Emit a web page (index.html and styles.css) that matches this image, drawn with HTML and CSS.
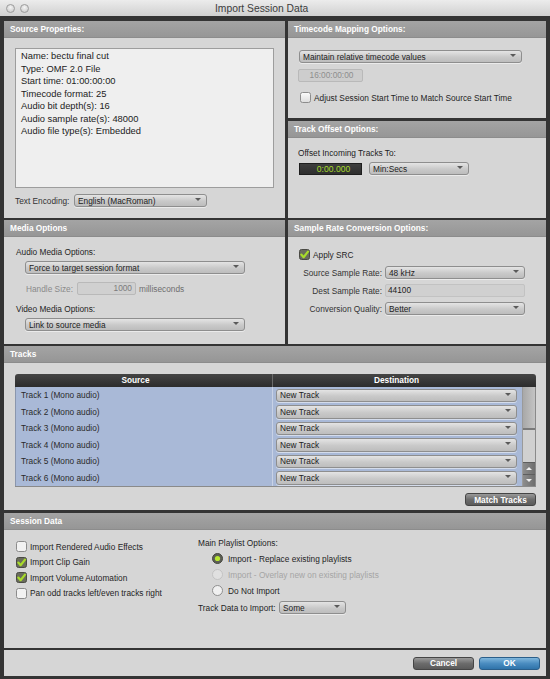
FILE: index.html
```html
<!DOCTYPE html>
<html>
<head>
<meta charset="utf-8">
<title>Import Session Data</title>
<link rel="stylesheet" href="styles.css">
</head>
<body>
<div class="window">
  <div class="titlebar">
    <div class="lights"><span class="light"></span><span class="light"></span></div>
    <div class="title">Import Session Data</div>
  </div>

  <div class="main">
    <div class="toprow">
      <section class="panel source">
        <div class="phead">Source Properties:</div>
        <div class="listbox">
          <div>Name: bectu final cut</div>
          <div>Type: OMF 2.0 File</div>
          <div>Start time: 01:00:00:00</div>
          <div>Timecode format: 25</div>
          <div>Audio bit depth(s): 16</div>
          <div>Audio sample rate(s): 48000</div>
          <div>Audio file type(s): Embedded</div>
        </div>
        <div class="encrow">
          <span class="enclbl">Text Encoding:</span>
          <div class="sel w-enc"><span>English (MacRoman)</span><i class="arr"></i></div>
        </div>
      </section>

      <div class="rightcol">
        <section class="panel timecode">
          <div class="phead">Timecode Mapping Options:</div>
          <div class="sel w-tc"><span>Maintain relative timecode values</span><i class="arr"></i></div>
          <div class="field tcfield">16:00:00:00</div>
          <div class="checkrow tccheck">
            <svg class="cb" width="11" height="11" viewBox="0 0 11 11"><defs><linearGradient id="cbg" x1="0" y1="0" x2="0" y2="1"><stop offset="0" stop-color="#fbfbfb"/><stop offset="1" stop-color="#dcdcdc"/></linearGradient></defs><rect x="0.5" y="0.5" width="10" height="10" rx="2" fill="url(#cbg)" stroke="#8c8c8c"/></svg>
            <span>Adjust Session Start Time to Match Source Start Time</span>
          </div>
        </section>
        <section class="panel offset">
          <div class="phead">Track Offset Options:</div>
          <div class="lbl offlbl">Offset Incoming Tracks To:</div>
          <div class="offrow">
            <div class="counter">0:00.000</div>
            <div class="sel w-min"><span>Min:Secs</span><i class="arr"></i></div>
          </div>
        </section>
      </div>
    </div>

    <div class="midrow">
      <section class="panel media">
        <div class="phead">Media Options</div>
        <div class="lbl audlbl">Audio Media Options:</div>
        <div class="sel w-media"><span>Force to target session format</span><i class="arr"></i></div>
        <div class="handlerow">
          <span class="dis hlbl">Handle Size:</span>
          <div class="field hfield">1000</div>
          <span class="dis2">milliseconds</span>
        </div>
        <div class="lbl vidlbl">Video Media Options:</div>
        <div class="sel w-media"><span>Link to source media</span><i class="arr"></i></div>
      </section>

      <section class="panel srcpanel">
        <div class="phead">Sample Rate Conversion Options:</div>
        <div class="checkrow srccheck">
          <svg class="cb" width="11" height="11" viewBox="0 0 11 11"><rect x="0.5" y="0.5" width="10" height="10" rx="2" fill="#6a6c5c" stroke="#4a4a44"/><path d="M2.3 5.6 L4.6 8.2 L9 2.6" fill="none" stroke="#a8dc2a" stroke-width="2.2" stroke-linecap="round" stroke-linejoin="round"/></svg>
          <span>Apply SRC</span>
        </div>
        <div class="srcgrid">
          <span class="rl">Source Sample Rate:</span>
          <div class="sel"><span>48 kHz</span><i class="arr"></i></div>
          <span class="rl">Dest Sample Rate:</span>
          <div class="field destfield">44100</div>
          <span class="rl">Conversion Quality:</span>
          <div class="sel"><span>Better</span><i class="arr"></i></div>
        </div>
      </section>
    </div>

    <section class="panel tracks">
      <div class="phead">Tracks</div>
      <div class="table">
        <div class="thead">
          <div class="th th-src">Source</div>
          <div class="th th-dst">Destination</div>
        </div>
        <div class="tbody">
          <div class="col-src">
            <div class="trow">Track 1 (Mono audio)</div>
            <div class="trow">Track 2 (Mono audio)</div>
            <div class="trow">Track 3 (Mono audio)</div>
            <div class="trow">Track 4 (Mono audio)</div>
            <div class="trow">Track 5 (Mono audio)</div>
            <div class="trow">Track 6 (Mono audio)</div>
          </div>
          <div class="col-dst">
            <div class="drow"><div class="sel tsel"><span>New Track</span><i class="arr"></i></div></div>
            <div class="drow"><div class="sel tsel"><span>New Track</span><i class="arr"></i></div></div>
            <div class="drow"><div class="sel tsel"><span>New Track</span><i class="arr"></i></div></div>
            <div class="drow"><div class="sel tsel"><span>New Track</span><i class="arr"></i></div></div>
            <div class="drow"><div class="sel tsel"><span>New Track</span><i class="arr"></i></div></div>
            <div class="drow"><div class="sel tsel"><span>New Track</span><i class="arr"></i></div></div>
          </div>
          <div class="scroll">
            <div class="thumb"></div>
            <div class="strack"></div>
            <div class="sbtn"><i class="up"></i></div>
            <div class="sbtn"><i class="down"></i></div>
          </div>
        </div>
      </div>
      <div class="matchrow"><div class="btn dark">Match Tracks</div></div>
    </section>

    <section class="panel session">
      <div class="phead">Session Data</div>
      <div class="sessbody">
        <div class="checks">
          <div class="checkrow">
            <svg class="cb" width="11" height="11" viewBox="0 0 11 11"><rect x="0.5" y="0.5" width="10" height="10" rx="2" fill="#f2f2f2" stroke="#8c8c8c"/></svg>
            <span>Import Rendered Audio Effects</span>
          </div>
          <div class="checkrow">
            <svg class="cb" width="11" height="11" viewBox="0 0 11 11"><rect x="0.5" y="0.5" width="10" height="10" rx="2" fill="#6a6c5c" stroke="#4a4a44"/><path d="M2.3 5.6 L4.6 8.2 L9 2.6" fill="none" stroke="#a8dc2a" stroke-width="2.2" stroke-linecap="round" stroke-linejoin="round"/></svg>
            <span>Import Clip Gain</span>
          </div>
          <div class="checkrow">
            <svg class="cb" width="11" height="11" viewBox="0 0 11 11"><rect x="0.5" y="0.5" width="10" height="10" rx="2" fill="#6a6c5c" stroke="#4a4a44"/><path d="M2.3 5.6 L4.6 8.2 L9 2.6" fill="none" stroke="#a8dc2a" stroke-width="2.2" stroke-linecap="round" stroke-linejoin="round"/></svg>
            <span>Import Volume Automation</span>
          </div>
          <div class="checkrow">
            <svg class="cb" width="11" height="11" viewBox="0 0 11 11"><rect x="0.5" y="0.5" width="10" height="10" rx="2" fill="#f2f2f2" stroke="#8c8c8c"/></svg>
            <span>Pan odd tracks left/even tracks right</span>
          </div>
        </div>
        <div class="playlist">
          <div class="lbl">Main Playlist Options:</div>
          <div class="radios">
            <div class="radiorow">
              <svg class="rb" width="11" height="11" viewBox="0 0 11 11"><circle cx="5.5" cy="5.5" r="5" fill="#5d5f55" stroke="#45463f"/><circle cx="5.5" cy="5.5" r="2.6" fill="#b8e830"/></svg>
              <span>Import - Replace existing playlists</span>
            </div>
            <div class="radiorow disabled">
              <svg class="rb" width="11" height="11" viewBox="0 0 11 11"><circle cx="5.5" cy="5.5" r="5" fill="#e0e0e0" stroke="#c2c2c2"/></svg>
              <span>Import - Overlay new on existing playlists</span>
            </div>
            <div class="radiorow">
              <svg class="rb" width="11" height="11" viewBox="0 0 11 11"><circle cx="5.5" cy="5.5" r="5" fill="#f0f0f0" stroke="#8e8e8e"/></svg>
              <span>Do Not Import</span>
            </div>
          </div>
          <div class="tdrow">
            <span class="tdlbl">Track Data to Import:</span>
            <div class="sel w-some"><span>Some</span><i class="arr"></i></div>
          </div>
        </div>
      </div>
    </section>

    <div class="footer">
      <div class="btn dark cancel">Cancel</div>
      <div class="btn blue ok">OK</div>
    </div>
  </div>
</div>
</body>
</html>
```

FILE: styles.css
```css
* { box-sizing: border-box; margin: 0; padding: 0; }
html, body { width: 550px; height: 679px; overflow: hidden; }
body {
  background: #343434;
  font-family: "Liberation Sans", Arial, sans-serif;
  font-size: 8.3px;
  color: #1f1f1f;
}
.window { width: 550px; height: 679px; display: flex; flex-direction: column; }

/* title bar */
.titlebar {
  height: 16px;
  background: linear-gradient(#ececec, #d0d0d0);
  display: flex;
  align-items: center;
}
.lights { display: flex; gap: 5px; padding-left: 6px; width: 215px; }
.light {
  width: 9px; height: 9px; border-radius: 50%;
  background: radial-gradient(circle at 50% 35%, #f4f4f4, #c4c4c4);
  border: 1px solid #9c9c9c;
}
.title { font-size: 10.3px; color: #3c3c3c; }

.main { padding: 5px 4px 0 4px; display: flex; flex-direction: column; }

/* panels */
.panel { background: #d6d6d6; display: flex; flex-direction: column; }
.phead {
  height: 17px;
  flex: none;
  background: linear-gradient(#a4a4a4, #969696);
  color: #fff;
  font-weight: bold;
  font-size: 8.3px;
  line-height: 17px;
  padding-left: 6px;
  border-bottom: 1px solid #8c8c8c;
}

.toprow { display: grid; grid-template-columns: 281px 258px; column-gap: 3px; height: 197px; }
.rightcol { display: flex; flex-direction: column; gap: 3px; }
.rightcol .panel { height: 97px; }
.midrow { display: grid; grid-template-columns: 281px 258px; column-gap: 3px; height: 124px; margin-top: 2px; }

/* generic controls */
.sel {
  height: 13px;
  border: 1px solid #8e8e8e;
  border-radius: 3px;
  background: linear-gradient(#e4e4e4, #c9c9c9 55%, #bdbdbd);
  display: flex;
  justify-content: space-between;
  align-items: center;
  padding: 0 5px 0 3px;
  font-size: 8.3px;
  color: #222;
  box-shadow: 0 1px 0 rgba(255,255,255,0.5);
}
.arr {
  align-self: flex-start;
  margin-top: 3px;
  width: 0; height: 0;
  border-left: 3px solid transparent;
  border-right: 3px solid transparent;
  border-top: 3px solid #5a5a5a;
}
.field {
  height: 13px;
  border: 1px solid #b9b9b9;
  border-radius: 2px;
  background: #cdcdcd;
  font-size: 8.3px;
  line-height: 11px;
}
.checkrow { display: flex; align-items: center; gap: 3px; }
.cb, .rb { flex: none; display: block; }
.lbl { font-size: 8.3px; }

/* source properties */
.listbox {
  margin: 10px 0 0 11px;
  width: 259px;
  height: 140px;
  background: #efefef;
  border: 1px solid #9d9d9d;
  padding: 1px 0 0 5px;
  font-size: 9.35px;
  line-height: 12.5px;
  color: #222;
}
.encrow { display: flex; align-items: center; margin: 6px 0 0 11px; height: 13px; }
.enclbl { width: 59px; color: #333; }
.w-enc { width: 133px; }

/* timecode */
.w-tc { width: 223px; margin: 12px 0 0 11px; }
.tcfield { width: 65px; margin: 6px 0 0 10px; text-align: center; color: #8e8e8e; padding-left: 2px; }
.tccheck { margin: 10px 0 0 12px; }

/* offset */
.offlbl { margin: 10px 0 0 10px; color: #222; }
.offrow { display: flex; align-items: center; gap: 7px; margin: 4px 0 0 11px; }
.counter {
  width: 63px; height: 12px;
  background: linear-gradient(#3e3e3e, #2e2e2e);
  border: 1px solid #1e1e1e;
  color: #a6dc2c;
  font-size: 8.6px;
  line-height: 10px;
  text-align: center;
  padding-left: 6px;
}
.w-min { width: 100px; }

/* media */
.audlbl { margin: 10px 0 0 12px; }
.w-media { width: 220px; margin: 4px 0 0 21px; }
.handlerow { display: flex; align-items: center; margin: 8px 0 0 22px; height: 13px; }
.dis { color: #8a8a8a; }
.hlbl { width: 51px; }
.hfield { width: 59px; text-align: right; padding-right: 3px; color: #7c7c7c; background: #d0d0d0; }
.dis2 { color: #6e6e6e; margin-left: 3px; }
.vidlbl { margin: 9px 0 0 12px; }

/* sample rate */
.srccheck { margin: 12px 0 0 11px; }
.srcgrid {
  display: grid;
  grid-template-columns: 94px 140px;
  column-gap: 3px;
  row-gap: 5px;
  align-items: center;
  margin-top: 6px;
}
.rl { text-align: right; color: #333; }
.destfield { background: #d0d0d0; border-color: #c2c2c2; padding-left: 2px; color: #222; }

/* tracks */
.tracks { height: 164px; margin-top: 2px; }
.table { margin: 11px 0 0 11px; width: 521px; border-bottom: 1px solid #8a8a8a; }
.thead {
  height: 13px;
  display: flex;
  background: linear-gradient(#454545, #2c2c2c);
  border-radius: 3px 3px 0 0;
  color: #fff;
  font-weight: bold;
  font-size: 8.3px;
  line-height: 13px;
}
.th-src { width: 258px; text-align: center; padding-right: 16px; border-right: 1px solid #6a6a6a; }
.th-dst { flex: 1; text-align: center; padding-right: 16px; }
.tbody { display: flex; height: 99px; }
.col-src { width: 258px; background: #a9b9d7; border-left: 1px solid #8a96ad; border-right: 1px solid #c8d2e6; }
.trow { height: 16.5px; line-height: 16.5px; padding-left: 5px; color: #2a2a2a; }
.col-dst { width: 249px; background: #a9b9d7; }
.drow { height: 16.5px; display: flex; align-items: center; padding-left: 3px; }
.tsel { width: 241px; height: 13.5px; }
.scroll { width: 14px; display: flex; flex-direction: column; background: #cbcbcb; border-left: 1px solid #9a9a9a; border-right: 1px solid #8a8a8a; }
.thumb { height: 43px; background: linear-gradient(90deg, #a8a8a8, #c4c4c4); border-bottom: 2px solid #7a7a7a; }
.strack { flex: 1; background: #d0d0d0; }
.sbtn {
  height: 12px;
  background: linear-gradient(90deg, #8d8d8d, #6e6e6e);
  border-top: 1px solid #5e5e5e;
  display: flex; align-items: center; justify-content: center;
}
.up { width: 0; height: 0; border-left: 3px solid transparent; border-right: 3px solid transparent; border-bottom: 3px solid #f0f0f0; }
.down { width: 0; height: 0; border-left: 3px solid transparent; border-right: 3px solid transparent; border-top: 3px solid #f0f0f0; }
.matchrow { display: flex; justify-content: flex-end; padding-right: 10px; margin-top: 6px; }

.btn {
  height: 13px;
  border-radius: 3px;
  color: #fff;
  font-weight: bold;
  font-size: 8.3px;
  display: flex; align-items: center; justify-content: center;
}
.btn.dark { background: linear-gradient(#9a9a9a, #6c6c6c 50%, #5a5a5a); border: 1px solid #454545; }
.btn.blue { background: linear-gradient(#7fb6dc, #4a8cc0 50%, #2f73aa); border: 1px solid #2a5e8a; }
.matchrow .btn { width: 71px; }

/* session */
.session { height: 135px; margin-top: 3px; }
.sessbody { display: flex; }
.checks { display: flex; flex-direction: column; gap: 4.6px; margin: 11px 0 0 12px; width: 182px; }
.checks .checkrow { height: 11px; }
.playlist { margin-top: 8px; }
.radios { display: flex; flex-direction: column; gap: 5.2px; margin: 5px 0 0 14px; }
.radiorow { display: flex; align-items: center; gap: 5px; height: 11px; }
.radiorow.disabled { color: #a5a5a5; }
.tdrow { display: flex; align-items: center; margin-top: 5px; height: 13px; }
.tdlbl { width: 81px; }
.w-some { width: 67px; }

/* footer */
.footer {
  height: 26px;
  margin-top: 2px;
  background: #d6d6d6;
  display: flex;
  justify-content: flex-end;
  align-items: center;
  gap: 5px;
  padding-right: 6px;
}
.footer .btn { width: 61px; }
```
